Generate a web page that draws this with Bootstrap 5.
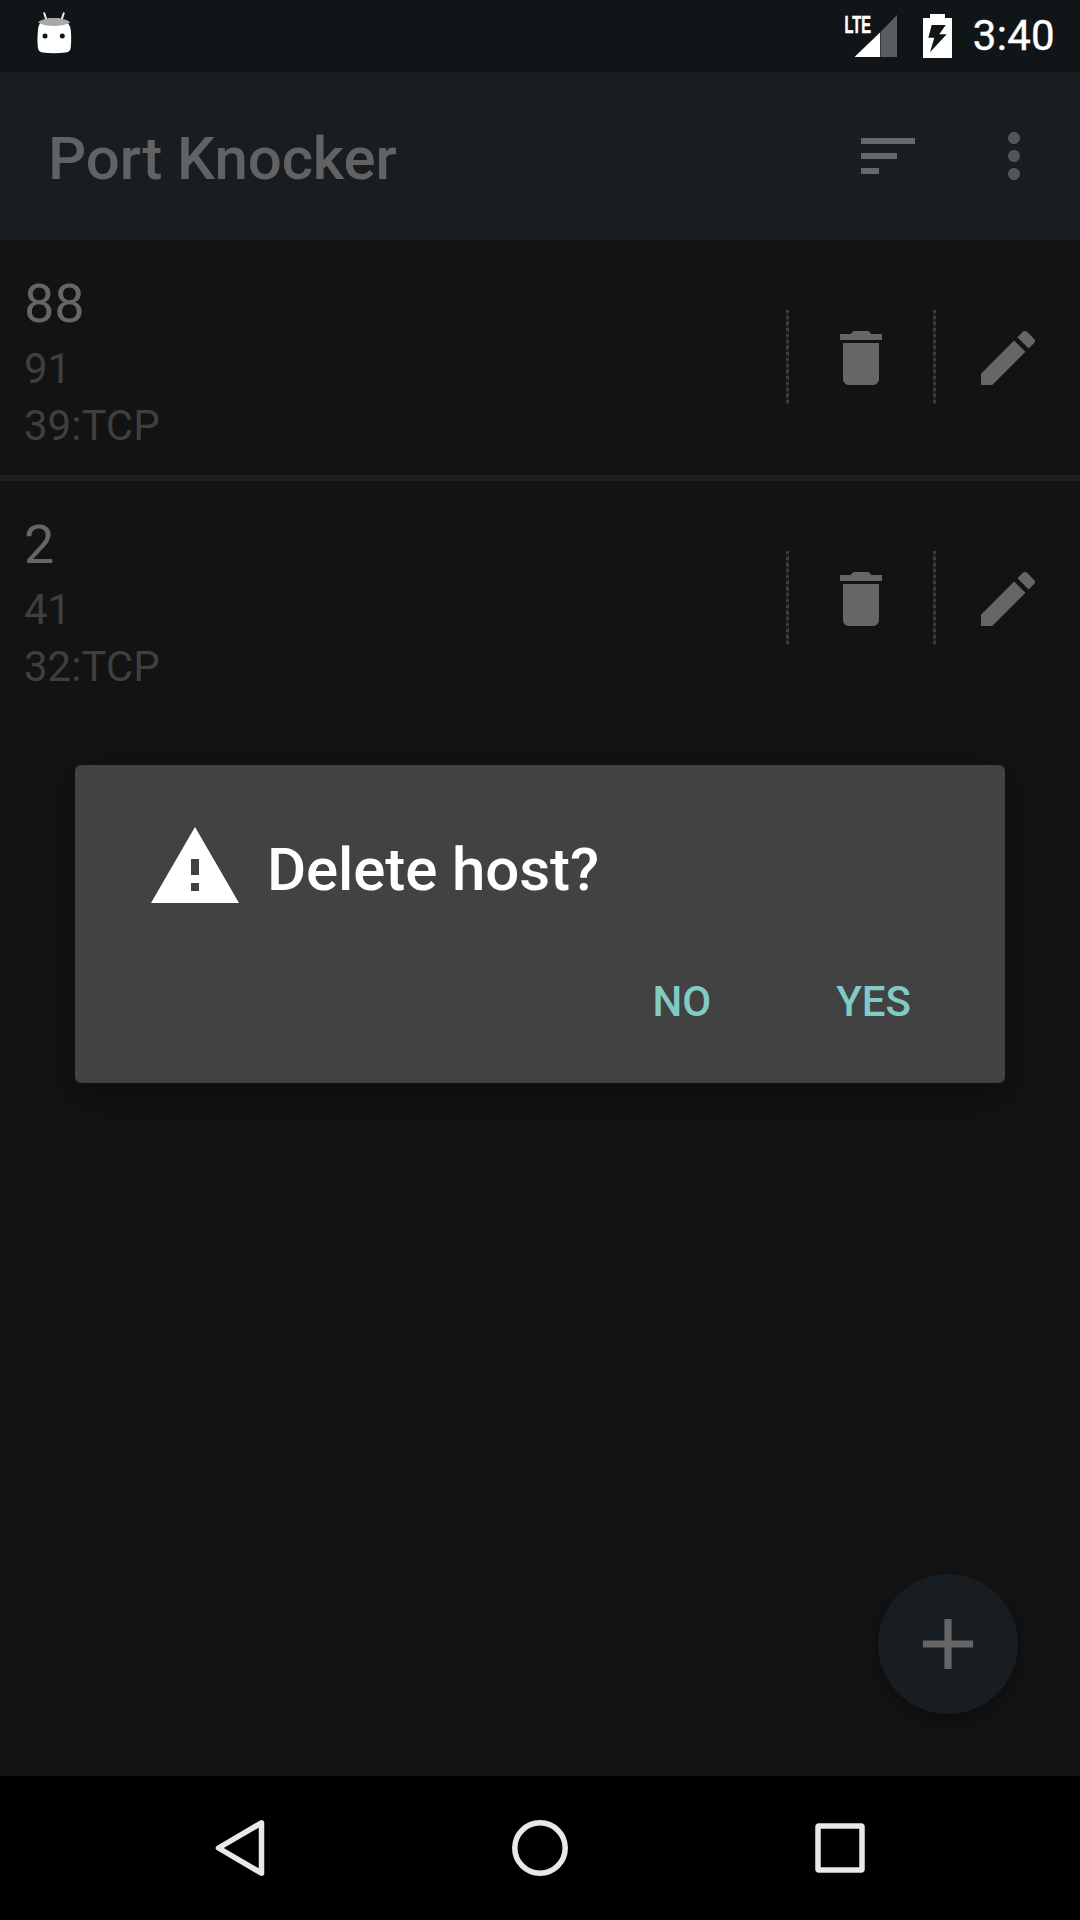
<!DOCTYPE html>
<html lang="en">
<head>
<meta charset="utf-8">
<title>Port Knocker</title>
<link rel="stylesheet" href="https://cdn.jsdelivr.net/npm/bootstrap@5.3.0/dist/css/bootstrap.min.css">
<style>
html,body{width:1080px;height:1920px;margin:0;overflow:hidden}
body{background:#131313;font-family:Roboto,"Liberation Sans",sans-serif}
.pk-page{width:1080px;height:1920px}
.pk-status{height:72px;background:#101517;color:#fff;flex:none}
.pk-droid{margin-left:25px}
.pk-signal{margin-right:25px}
.pk-batt{margin-right:21px}
.pk-clock{font-size:42px;line-height:72px;margin-right:25px;font-weight:400;letter-spacing:.3px;-webkit-text-stroke:.4px #fff}
.pk-toolbar{height:168px;background:#181d21;flex:none;padding-left:48px;padding-right:30px}
.pk-title{font-size:60px;font-weight:500;color:#626262;line-height:1;letter-spacing:-.1px;padding-top:5px}
.pk-gap{margin-right:54px}
.pk-main{min-height:0}
.pk-host{height:235px;flex:none}
.pk-rule{height:6px;background:#1e1e1e;flex:none}
.pk-text{padding-left:24px;padding-top:28px}
.pk-name{font-size:54px;line-height:72px;color:#666}
.pk-sub{font-size:42px;line-height:57px;color:#3f3f3f}
.pk-cell{width:147px;flex:none}
.pk-cell:last-child{width:146px}
.pk-cell svg{fill:#666}
.pk-trash{padding-right:2px}
.pk-sep{width:3px;height:94px;flex:none;margin-top:-1px;margin-left:-1px;background:repeating-linear-gradient(to bottom,#3c3c3c 0 3px,#222 3px 6px)}
.pk-dialog{left:75px;top:765px;width:930px;height:318px;background:#424242;border-radius:6px;box-shadow:0 12px 40px rgba(0,0,0,.35)}
.pk-dialog-head{padding:54px 0 0 72px}
.pk-dialog-title{font-size:60px;font-weight:500;color:#fff;line-height:1;margin-left:24px;margin-top:6px;letter-spacing:-.1px}
.pk-dialog-foot{margin-top:59px;padding-right:94px;gap:125px}
.pk-action{font-size:42px;font-weight:500;color:#80cbc4;line-height:56px;padding:0;border:0;background:none;border-radius:0}
.pk-fab{left:878px;top:1574px;width:140px;height:140px;background:#181d21;box-shadow:0 6px 16px rgba(0,0,0,.35)}
.pk-nav{height:144px;background:#000;flex:none}
.pk-navcell{width:300px}
</style>
</head>
<body class="position-relative">
<div class="pk-page d-flex flex-column">

  <div class="pk-status d-flex align-items-center">
    <svg class="pk-droid flex-shrink-0" width="50" height="72" viewBox="25 0 50 72">
      <path d="M44 12.500 46.800 21M64 12.500 61.200 21" stroke="#eee" stroke-width="2" fill="none"/>
      <path d="M38 30c0-8 7-12 16-12s16 4 16.800 12c.5 7 .5 11 0 17-.3 4-2 5-5 5.500-8 1-16 1-23 0-3-.5-4.500-1.500-5-5.500-.5-6-.5-10 .2-17z" fill="#fff"/>
      <path d="M37.800 22.500C41 19.500 47 18 54 18s13 1.500 16.500 4.500c-5 2.500-10.500 3.500-16.500 3.500s-12-1-16.200-3.500z" fill="#a9a9a9"/>
      <circle cx="45" cy="36" r="2.500" fill="#101517"/><circle cx="62.300" cy="36" r="2.500" fill="#101517"/>
    </svg>
    <div class="flex-grow-1"></div>
    <svg class="pk-signal flex-shrink-0" width="54" height="72" viewBox="845 0 54 72">
      <text x="845.500" y="33" font-family="Liberation Sans Narrow, Liberation Sans, sans-serif" font-weight="700" font-size="24" fill="#fff" stroke="#fff" stroke-width=".6" textLength="26.500" lengthAdjust="spacingAndGlyphs">LTE</text>
      <path d="M881 32.500V57H855.500z" fill="#fff"/>
      <path d="M881.500 32 898 15V57H881.500z" fill="#5a5e60"/>
    </svg>
    <svg class="pk-batt flex-shrink-0" width="29" height="72" viewBox="923 0 29 72">
      <path d="M930 14h15v4h7v40h-29V18h7z" fill="#fff"/>
      <path d="M931.700 25h14l-6.400 9.300h7.400L930 52.300l4.300-14.600h-6z" fill="#101517"/>
    </svg>
    <span class="pk-clock">3:40</span>
  </div>

  <div class="pk-toolbar d-flex align-items-center">
    <span class="pk-title flex-grow-1">Port Knocker</span>
    <svg class="pk-gap flex-shrink-0" width="72" height="72" viewBox="0 0 24 24" fill="#676767"><path d="M3 18h6v-2H3v2zM3 6v2h18V6H3zm0 7h12v-2H3v2z"/></svg>
    <svg class="flex-shrink-0" width="72" height="72" viewBox="0 0 24 24" fill="#555"><path d="M12 8c1.100 0 2-.9 2-2s-.9-2-2-2-2 .9-2 2 .9 2 2 2zm0 2c-1.100 0-2 .9-2 2s.9 2 2 2 2-.9 2-2-.9-2-2-2zm0 6c-1.100 0-2 .9-2 2s.9 2 2 2 2-.9 2-2-.9-2-2-2z"/></svg>
  </div>

  <div class="pk-main flex-grow-1 d-flex flex-column">
    <div class="pk-host d-flex">
      <div class="pk-text flex-grow-1">
        <div class="pk-name">88</div>
        <div class="pk-sub">91</div>
        <div class="pk-sub">39:TCP</div>
      </div>
      <div class="pk-cell pk-trash d-flex align-items-center">
        <div class="pk-sep"></div>
        <div class="flex-grow-1 d-flex justify-content-center"><svg width="72" height="72" viewBox="0 0 24 24"><path d="M6 19c0 1.100.9 2 2 2h8c1.100 0 2-.9 2-2V7H6v12zM19 4h-3.500l-1-1h-5l-1 1H5v2h14V4z"/></svg></div>
      </div>
      <div class="pk-cell d-flex align-items-center">
        <div class="pk-sep"></div>
        <div class="flex-grow-1 d-flex justify-content-center"><svg width="72" height="72" viewBox="0 0 24 24"><path d="M3 17.250V21h3.750L17.810 9.940l-3.750-3.750L3 17.250zM20.710 7.040c.39-.39.39-1.020 0-1.410l-2.340-2.340c-.39-.39-1.020-.39-1.410 0l-1.830 1.830 3.750 3.750 1.830-1.830z"/></svg></div>
      </div>
    </div>
    <div class="pk-rule"></div>
    <div class="pk-host d-flex">
      <div class="pk-text flex-grow-1">
        <div class="pk-name">2</div>
        <div class="pk-sub">41</div>
        <div class="pk-sub">32:TCP</div>
      </div>
      <div class="pk-cell pk-trash d-flex align-items-center">
        <div class="pk-sep"></div>
        <div class="flex-grow-1 d-flex justify-content-center"><svg width="72" height="72" viewBox="0 0 24 24"><path d="M6 19c0 1.100.9 2 2 2h8c1.100 0 2-.9 2-2V7H6v12zM19 4h-3.500l-1-1h-5l-1 1H5v2h14V4z"/></svg></div>
      </div>
      <div class="pk-cell d-flex align-items-center">
        <div class="pk-sep"></div>
        <div class="flex-grow-1 d-flex justify-content-center"><svg width="72" height="72" viewBox="0 0 24 24"><path d="M3 17.250V21h3.750L17.810 9.940l-3.750-3.750L3 17.250zM20.710 7.040c.39-.39.39-1.020 0-1.410l-2.340-2.340c-.39-.39-1.020-.39-1.410 0l-1.830 1.830 3.750 3.750 1.830-1.830z"/></svg></div>
      </div>
    </div>
  </div>

  <div class="pk-nav d-flex justify-content-center align-items-center">
    <div class="pk-navcell d-flex justify-content-center">
      <svg width="72" height="72" viewBox="0 0 72 72" fill="none" stroke="#e8e8e8" stroke-width="5.500" stroke-linejoin="round"><path d="M14.500 36 57.500 10.800V61.200z"/></svg>
    </div>
    <div class="pk-navcell d-flex justify-content-center">
      <svg width="72" height="72" viewBox="0 0 72 72" fill="none" stroke="#e8e8e8" stroke-width="5.500"><circle cx="36" cy="36" r="25.200"/></svg>
    </div>
    <div class="pk-navcell d-flex justify-content-center">
      <svg width="72" height="72" viewBox="0 0 72 72" fill="none" stroke="#e8e8e8" stroke-width="5.500" stroke-linejoin="round"><rect x="14" y="14" width="44" height="44" rx="1"/></svg>
    </div>
  </div>
</div>

<div class="pk-dialog position-absolute">
  <div class="pk-dialog-head d-flex align-items-center">
    <svg class="flex-shrink-0" width="96" height="96" viewBox="0 0 24 24" fill="#fff"><path d="M1 21h22L12 2 1 21zm12-3h-2v-2h2v2zm0-4h-2v-4h2v4z"/></svg>
    <span class="pk-dialog-title">Delete host?</span>
  </div>
  <div class="pk-dialog-foot d-flex justify-content-end">
    <button type="button" class="btn pk-action">NO</button>
    <button type="button" class="btn pk-action">YES</button>
  </div>
</div>

<div class="pk-fab position-absolute rounded-circle d-flex align-items-center justify-content-center">
  <svg width="86" height="86" viewBox="0 0 24 24" fill="#666"><path d="M19 13h-6v6h-2v-6H5v-2h6V5h2v6h6v2z"/></svg>
</div>
</body>
</html>
